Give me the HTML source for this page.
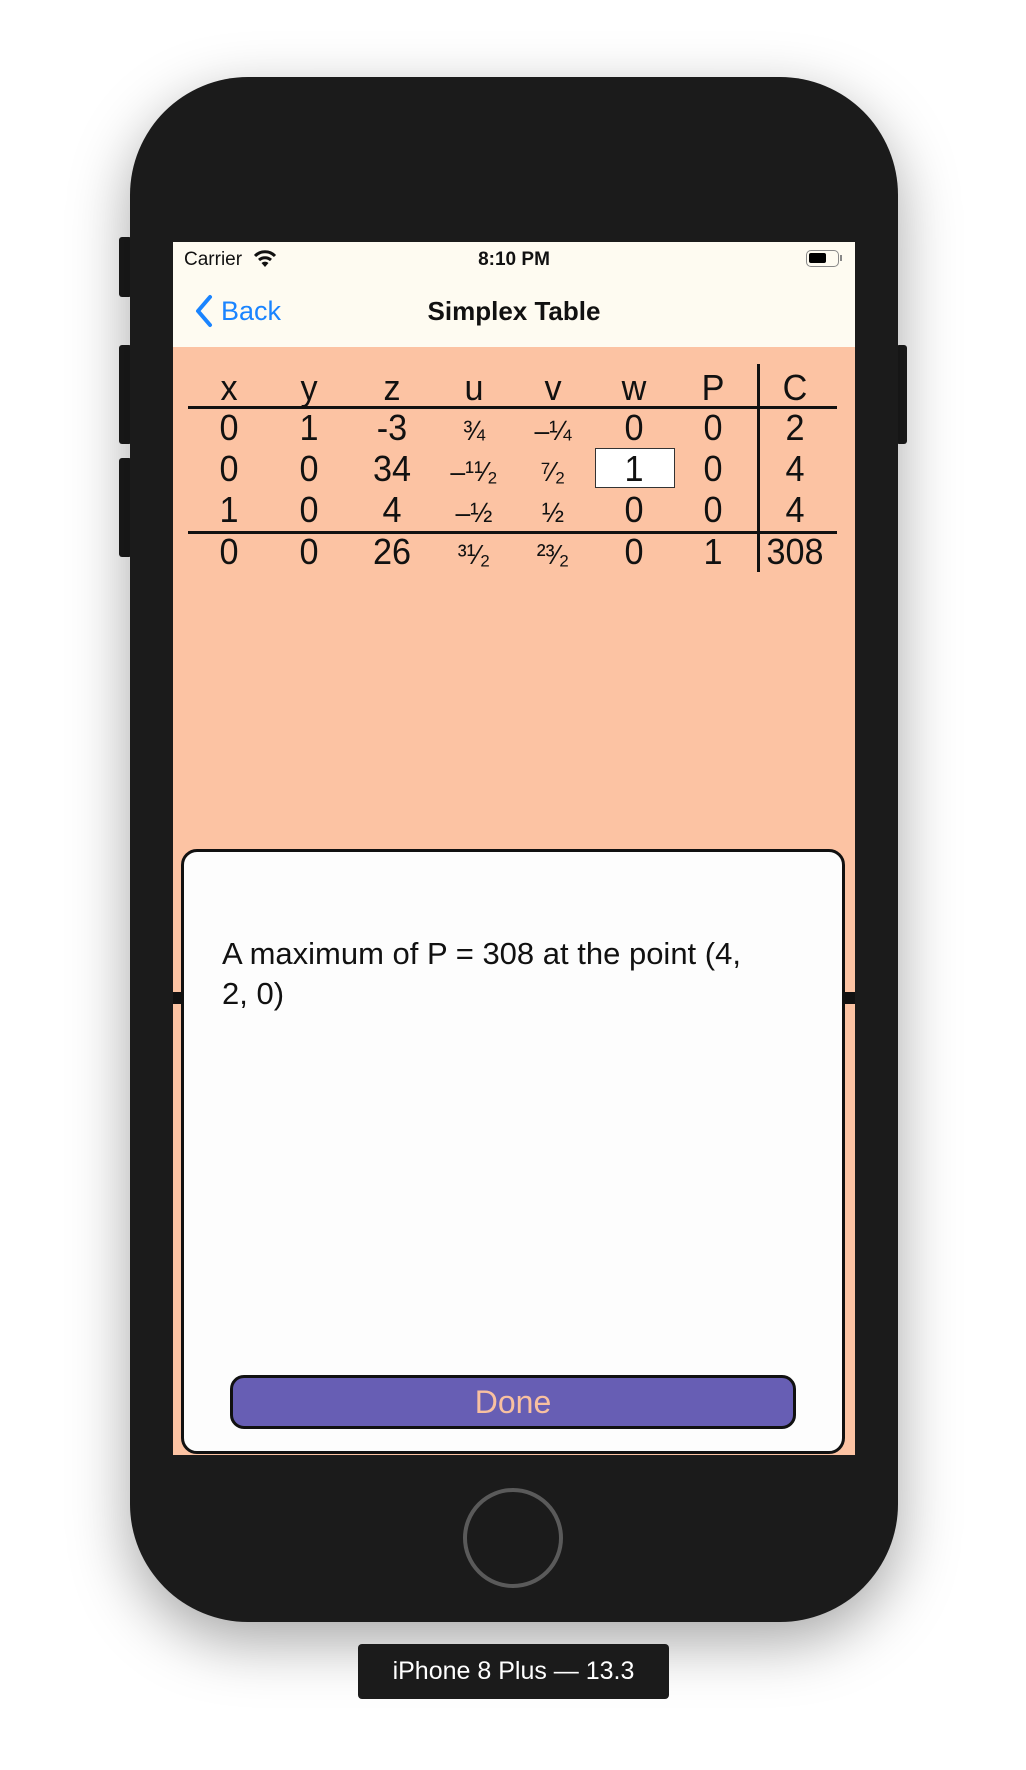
<!DOCTYPE html>
<html><head><meta charset="utf-8"><style>
*{margin:0;padding:0;box-sizing:border-box}
body{width:1026px;height:1770px;background:#fff;position:relative;overflow:hidden;font-family:"Liberation Sans",sans-serif}
.abs{position:absolute}
.phone{left:130px;top:77px;width:768px;height:1545px;background:#1b1b1b;border-radius:118px;box-shadow:0 20px 60px rgba(0,0,0,.35)}
.btn{background:#1b1b1b;border-radius:3px}
.screen{left:173px;top:242px;width:682px;height:1213px;background:#fcc3a3;overflow:hidden}
.status{left:0;top:0;width:682px;height:105px;background:#fefbf1}
.cell{position:absolute;width:90px;margin-left:-45px;text-align:center;font-size:36px;color:#111;transform:scaleX(.95);line-height:40px}
.fr{font-size:28px}
.hl{position:absolute;height:3px;background:#111}
</style></head><body>
<div class="abs btn" style="left:119px;top:237px;width:13px;height:60px"></div>
<div class="abs btn" style="left:119px;top:345px;width:13px;height:99px"></div>
<div class="abs btn" style="left:119px;top:458px;width:13px;height:99px"></div>
<div class="abs btn" style="left:896px;top:345px;width:11px;height:99px"></div>
<div class="abs phone"></div>
<div class="abs screen">
  <div class="abs status"></div>
  <div class="abs" style="left:11px;top:7px;font-size:19px;color:#111">Carrier</div>
  <svg class="abs" style="left:80px;top:8px" width="24" height="18" viewBox="0 0 24 18"><path d="M2 6 A14 14 0 0 1 22 6" stroke="#111" stroke-width="3" fill="none"/><path d="M6 10 A9 9 0 0 1 18 10" stroke="#111" stroke-width="3" fill="none"/><path d="M12 17 L8.5 13 A5 5 0 0 1 15.5 13 Z" fill="#111"/></svg>
  <div class="abs" style="left:0;width:682px;top:7px;text-align:center;font-size:19px;font-weight:bold;color:#111">8:10 PM</div>
  <div class="abs" style="left:633px;top:8px;width:33px;height:17px;border:1.5px solid #888;border-radius:5px"><div style="position:absolute;left:2px;top:2px;width:17px;height:10px;background:#000;border-radius:2px"></div></div>
  <div class="abs" style="left:667px;top:13px;width:2px;height:6px;background:#888"></div>
  <svg class="abs" style="left:21px;top:52px" width="20" height="34" viewBox="0 0 20 34"><path d="M16 3 L4 17 L16 31" stroke="#1a84ff" stroke-width="4" fill="none" stroke-linecap="round" stroke-linejoin="round"/></svg>
  <div class="abs" style="left:48px;top:54px;font-size:27px;color:#1a84ff">Back</div>
  <div class="abs" style="left:0;width:682px;top:54px;text-align:center;font-size:26px;font-weight:bold;color:#111">Simplex Table</div>
</div>
<div class="abs" style="left:0;top:0;width:1026px;height:700px">
  <div class="hl" style="left:188px;top:406px;width:649px"></div>
  <div class="hl" style="left:188px;top:531px;width:649px"></div>
  <div class="abs" style="left:757px;top:364px;width:3px;height:208px;background:#111"></div>
  <div class="abs" style="left:595px;top:448px;width:80px;height:40px;background:#fff;border:1.5px solid #333"></div>
  <div class="cell" style="left:229px;top:368px">x</div><div class="cell" style="left:309px;top:368px">y</div><div class="cell" style="left:392px;top:368px">z</div><div class="cell" style="left:474px;top:368px">u</div><div class="cell" style="left:553px;top:368px">v</div><div class="cell" style="left:634px;top:368px">w</div><div class="cell" style="left:713px;top:368px">P</div><div class="cell" style="left:795px;top:368px">C</div>
  <div class="cell" style="left:229px;top:408px">0</div><div class="cell" style="left:309px;top:408px">1</div><div class="cell" style="left:392px;top:408px">-3</div><div class="cell" style="left:474px;top:408px"><span class="fr">¾</span></div><div class="cell" style="left:553px;top:408px"><span class="fr">–¼</span></div><div class="cell" style="left:634px;top:408px">0</div><div class="cell" style="left:713px;top:408px">0</div><div class="cell" style="left:795px;top:408px">2</div>
  <div class="cell" style="left:229px;top:449px">0</div><div class="cell" style="left:309px;top:449px">0</div><div class="cell" style="left:392px;top:449px">34</div><div class="cell" style="left:474px;top:449px"><span class="fr">–¹¹⁄₂</span></div><div class="cell" style="left:553px;top:449px"><span class="fr">⁷⁄₂</span></div><div class="cell" style="left:634px;top:449px">1</div><div class="cell" style="left:713px;top:449px">0</div><div class="cell" style="left:795px;top:449px">4</div>
  <div class="cell" style="left:229px;top:490px">1</div><div class="cell" style="left:309px;top:490px">0</div><div class="cell" style="left:392px;top:490px">4</div><div class="cell" style="left:474px;top:490px"><span class="fr">–½</span></div><div class="cell" style="left:553px;top:490px"><span class="fr">½</span></div><div class="cell" style="left:634px;top:490px">0</div><div class="cell" style="left:713px;top:490px">0</div><div class="cell" style="left:795px;top:490px">4</div>
  <div class="cell" style="left:229px;top:532px">0</div><div class="cell" style="left:309px;top:532px">0</div><div class="cell" style="left:392px;top:532px">26</div><div class="cell" style="left:474px;top:532px"><span class="fr">³¹⁄₂</span></div><div class="cell" style="left:553px;top:532px"><span class="fr">²³⁄₂</span></div><div class="cell" style="left:634px;top:532px">0</div><div class="cell" style="left:713px;top:532px">1</div><div class="cell" style="left:795px;top:532px">308</div>
</div>
<div class="abs" style="left:173px;top:992px;width:682px;height:12px;background:#111"></div>
<div class="abs" style="left:181px;top:849px;width:664px;height:605px;background:#fdfdfd;border:3px solid #111;border-radius:16px"></div>
<div class="abs" style="left:222px;top:934px;font-size:31px;line-height:40px;color:#111">A maximum of P = 308 at the point (4,<br>2, 0)</div>
<div class="abs" style="left:230px;top:1375px;width:566px;height:54px;background:#675eb4;border:3px solid #111;border-radius:14px;text-align:center;line-height:48px;font-size:32px;color:#f8c0a0">Done</div>
<div class="abs" style="left:463px;top:1488px;width:100px;height:100px;border:4px solid #5a5a5a;border-radius:50%"></div>
<div class="abs" style="left:358px;top:1644px;width:311px;height:55px;background:#1b1b1b;border-radius:4px;color:#fff;font-size:25px;text-align:center;line-height:55px">iPhone 8 Plus — 13.3</div>
</body></html>
